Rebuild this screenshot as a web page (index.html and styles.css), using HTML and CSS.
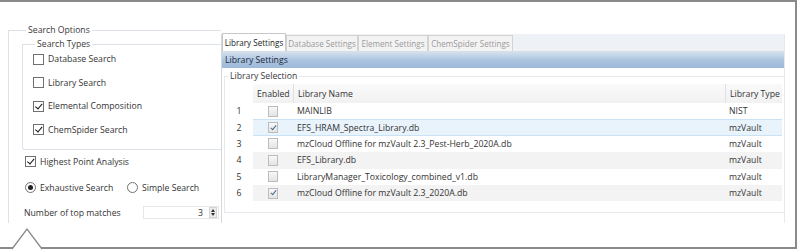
FILE: index.html
```html
<html>
	<head>
		<title>Search Options - Library Settings</title>
		<link rel="stylesheet" href="styles.css">
	</head>
	<body>
		<div class="frame">
			<div class="shot">
				<div class="options">
					<div class="group outer">
						<div class="group-title">Search Options</div>
						<div class="group types">
							<div class="group-title">Search Types</div>
							<div class="check"><span class="box"></span>Database Search</div>
							<div class="check"><span class="box"></span>Library Search</div>
							<div class="check"><span class="box on"></span>Elemental Composition</div>
							<div class="check"><span class="box on"></span>ChemSpider Search</div>
						</div>
						<div class="check solo"><span class="box on"></span>Highest Point Analysis</div>
						<div class="radios">
							<div class="radio first"><span class="dot on"></span>Exhaustive Search</div>
							<div class="radio"><span class="dot"></span>Simple Search</div>
						</div>
						<div class="matches">
							<span>Number of top matches</span>
							<span class="spin">3<span class="arrows"><i class="up"></i><i class="down"></i></span></span>
						</div>
					</div>
				</div>
				<div class="settings">
					<div class="tabstrip">
						<span class="tab active">Library Settings</span>
						<span class="tab w72">Database Settings</span>
						<span class="tab w70">Element Settings</span>
						<span class="tab w85">ChemSpider Settings</span>
					</div>
					<div class="bar">Library Settings</div>
					<div class="group selection">
						<div class="group-title">Library Selection</div>
						<div class="grid">
							<div class="row head"><span></span><span>Enabled</span><span class="sep">Library Name</span><span class="sep">Library Type</span></div>
							<div class="row"><span>1</span><span><i class="cb"></i></span><span>MAINLIB</span><span>NIST</span></div>
							<div class="row sel"><span>2</span><span><i class="cb on"></i></span><span>EFS_HRAM_Spectra_Library.db</span><span>mzVault</span></div>
							<div class="row"><span>3</span><span><i class="cb"></i></span><span>mzCloud Offline for mzVault 2.3_Pest-Herb_2020A.db</span><span>mzVault</span></div>
							<div class="row alt"><span>4</span><span><i class="cb"></i></span><span>EFS_Library.db</span><span>mzVault</span></div>
							<div class="row"><span>5</span><span><i class="cb"></i></span><span>LibraryManager_Toxicology_combined_v1.db</span><span>mzVault</span></div>
							<div class="row alt"><span>6</span><span><i class="cb on"></i></span><span>mzCloud Offline for mzVault 2.3_2020A.db</span><span>mzVault</span></div>
						</div>
					</div>
				</div>
			</div>
			<svg class="notch" width="36" height="24" viewBox="0 0 36 24">
				<rect x="3" y="19" width="28" height="5" fill="#fff" />
				<polyline points="2,22 17,2 32,22" fill="none" stroke="#8a8a8a" stroke-width="1.3" />
			</svg>
		</div>
	</body>
</html>
```

FILE: styles.css
```css
body {
	margin: 0;
	width: 800px;
	height: 251px;
	overflow: hidden;
	background: #fff;
	color: #333;
	font: 8.7px/12px "Open Sans", sans-serif;
}
.frame {
	position: relative;
	width: 797px;
	height: 249px;
	box-sizing: border-box;
	border-top: 2px solid #8a8a8a;
	border-right: 2px solid #8a8a8a;
	border-bottom: 2px solid #8a8a8a;
}
.shot {
	display: flex;
	height: 221px;
	padding-top: 22px;
	box-sizing: border-box;
	overflow: hidden;
}
.group {
	border-top: 1px solid #dce2e8;
	border-left: 1px solid #dce2e8;
}
.group-title {
	width: fit-content;
	margin: -7px 0 0 4px;
	padding: 0 2px;
	background: #fff;
	color: #3a3a3a;
}
.options {
	width: 213px;
	margin-left: 8px;
}
.outer {
	height: 400px;
	padding-left: 13px;
	margin-top: 6px;
}
.outer > .group-title {
	margin-left: 4px;
}
.types {
	margin-top: 8px;
	padding: 0 0 10px 10px;
	border-bottom: 1px solid #dce2e8;
	border-bottom-left-radius: 3px;
}
.types > .group-title {
	margin-left: 2px;
	margin-bottom: 0;
}
.check, .radio {
	display: flex;
	align-items: center;
	height: 18px;
}
.types .check {
	margin-bottom: 5.5px;
}
.types .check:last-child {
	margin-bottom: 0;
}
.box {
	width: 9px;
	height: 9px;
	border: 1px solid #707070;
	margin-right: 4px;
	background: #fff;
	position: relative;
}
.box.on::after {
	content: "";
	position: absolute;
	left: 2.5px;
	top: 0px;
	width: 2.5px;
	height: 5.5px;
	border: solid #111;
	border-width: 0 1.6px 1.6px 0;
	transform: rotate(40deg);
}
.solo {
	margin: 3px 0 0 3px;
}
.radios {
	display: flex;
	margin: 8px 0 0 3px;
}
.radio.first {
	width: 102px;
}
.dot {
	width: 9px;
	height: 9px;
	border: 1px solid #707070;
	border-radius: 50%;
	margin-right: 4px;
	display: flex;
	align-items: center;
	justify-content: center;
}
.dot.on::after {
	content: "";
	width: 5px;
	height: 5px;
	border-radius: 50%;
	background: #222;
}
.matches {
	display: flex;
	align-items: center;
	height: 18px;
	margin: 7px 2px 0 2px;
}
.spin {
	margin-left: auto;
	width: 76px;
	height: 13px;
	box-sizing: border-box;
	border: 1px solid #e6e6e6;
	display: flex;
	align-items: center;
	justify-content: flex-end;
	padding-right: 1px;
}
.arrows {
	display: flex;
	flex-direction: column;
	justify-content: space-evenly;
	align-items: center;
	width: 8px;
	height: 11px;
	margin-left: 6px;
	background: #ececec;
	border: 1px solid #d4d4d4;
	box-sizing: border-box;
}
.arrows i {
	width: 0;
	height: 0;
	border-left: 2.5px solid transparent;
	border-right: 2.5px solid transparent;
}
.arrows .up {
	border-bottom: 3px solid #333;
}
.arrows .down {
	border-top: 3px solid #333;
}
.settings {
	width: 564px;
	margin-top: 10px;
	border-left: 1px solid #d2d8df;
	border-right: 1px solid #e6e9ed;
	box-sizing: border-box;
}
.tabstrip {
	display: flex;
	align-items: flex-end;
	height: 18px;
	background: #eef1f5;
	border-bottom: 1px solid #d9dee4;
	box-sizing: border-box;
}
.tab {
	width: 64px;
	height: 16px;
	box-sizing: border-box;
	border: 1px solid #d3d3d3;
	border-bottom: none;
	background: #f3f3f3;
	color: #9a9a9a;
	text-align: center;
	font-size: 8.1px;
	line-height: 15px;
	white-space: nowrap;
	overflow: hidden;
}
.tab.active {
	height: 18px;
	line-height: 17px;
	background: #fff;
	color: #222;
	border-color: #c8c8c8;
}
.w72 {
	width: 72px;
}
.w70 {
	width: 70px;
}
.w85 {
	width: 85px;
}
.bar {
	height: 16px;
	line-height: 16px;
	padding-left: 3px;
	background: linear-gradient(#d3e0ef, #aac3df 55%, #9db8d9);
	color: #1c2a40;
}
.selection {
	margin: 8px 0 0 2px;
	padding-bottom: 11px;
	border-bottom: 1px solid #e3e7eb;
	border-color: #e6eaee;
}
.selection > .group-title {
	margin-left: 3px;
}
.grid {
	margin-top: 2px;
}
.row {
	display: grid;
	grid-template-columns: 28px 40px 432px 57px;
	height: 16.4px;
	align-items: stretch;
}
.row span {
	display: flex;
	align-items: center;
	padding-left: 4px;
	white-space: nowrap;
}
.row span:first-child {
	justify-content: center;
	padding-left: 0;
}
.row span:nth-child(2) {
	justify-content: center;
	padding-left: 0;
}
.row.head {
	height: 19px;
}
.row.head span + span {
	background: linear-gradient(#fafafa, #f1f1f1);
}
.row.head span:nth-child(2) {
	justify-content: flex-start;
	padding-left: 4px;
}
.row.head .sep {
	border-left: 1px solid #e0e0e0;
}
.row.alt span + span {
	background: #f3f3f3;
}
.row.sel span + span {
	background: #e9f3fc;
	box-shadow: inset 0 1px #c9e2f6, inset 0 -1px #c9e2f6;
}
.cb {
	width: 8px;
	height: 9px;
	border: 1px solid #bcbcbc;
	background: linear-gradient(#f8f8f8, #e4e4e4);
	position: relative;
}
.cb.on::after {
	content: "";
	position: absolute;
	left: 2.5px;
	top: 0.5px;
	width: 2px;
	height: 5px;
	border: solid #4a6891;
	border-width: 0 1.2px 1.2px 0;
	transform: rotate(40deg);
}
.notch {
	position: absolute;
	left: 10px;
	bottom: -4px;
}
```
